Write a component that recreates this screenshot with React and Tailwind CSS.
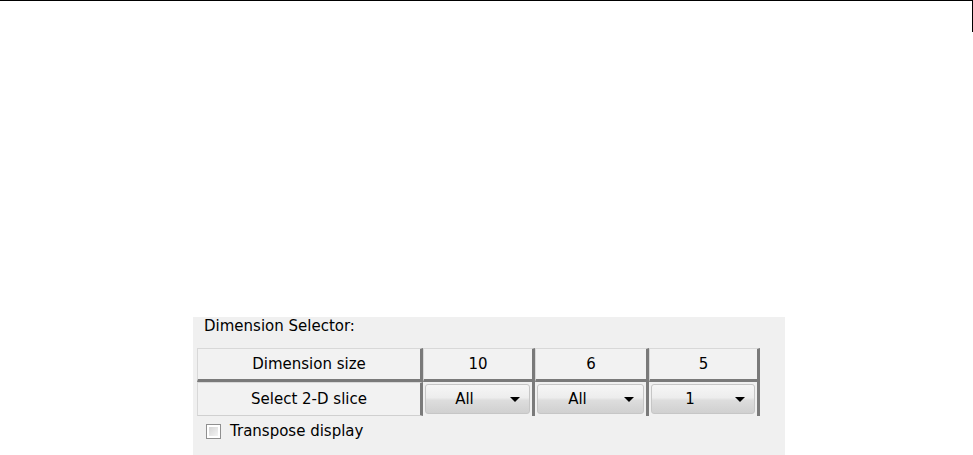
import React from "react";

const font = { fontFamily: '"DejaVu Sans", sans-serif' };

const sizes = [
  { value: "10", w: "w-[112px]" },
  { value: "6", w: "w-[114px]" },
  { value: "5", w: "w-[111px]" },
];

const slices = [
  { value: "All", w: "w-[112px]" },
  { value: "All", w: "w-[114px]" },
  { value: "1", w: "w-[111px]" },
];

const Arrow = () => (
  <div className="w-0 h-0 border-l-[5px] border-r-[5px] border-t-[5px] border-l-transparent border-r-transparent border-t-black" />
);

const Dropdown = ({ value, w }) => (
  <div className={`${w} h-[34px] border-r-[3px] border-r-[#7a7a7a] px-[2px] pt-[2px] pb-[2px] flex`}>
    <div className="flex-1 flex items-center rounded-[3px] border border-[#c6c6c6] bg-[linear-gradient(#f6f6f6,#ededed_45%,#dddddd_55%,#d0d0d0)]">
      <span className="flex-1 text-center leading-[18px]">{value}</span>
      <div className="w-[26px] flex justify-center pr-[3px]">
        <Arrow />
      </div>
    </div>
  </div>
);

export default function App() {
  return (
    <div className="h-[455px] w-[973px] bg-white overflow-hidden flex flex-col text-[15px] text-black" style={font}>
      {/* top frame edge */}
      <div className="h-[32px] border-t border-black flex justify-end">
        <div className="w-px h-full bg-black" />
      </div>

      <div className="mt-[285px] ml-[193px] w-[592px] flex-1 bg-[#f0f0f0] flex flex-col">
        <div className="ml-[11px] leading-[18px]">Dimension Selector:</div>

        <div className="mt-[13px] ml-[4px] flex flex-col">
          {/* row 1 */}
          <div className="flex">
            <div className="w-[226px] h-[34px] flex items-center justify-center bg-[#f2f2f2] border-t border-l border-t-[#d8d8d8] border-l-[#d8d8d8] border-b-[3px] border-b-[#7a7a7a] border-r-[3px] border-r-[#7a7a7a]">
              Dimension size
            </div>
            {sizes.map((s, i) => (
              <div
                key={i}
                className={`${s.w} h-[34px] flex items-center justify-center bg-[#f2f2f2] border-t border-l border-t-[#d8d8d8] border-l-[#d8d8d8] border-b-[3px] border-b-[#7a7a7a] border-r-[3px] border-r-[#7a7a7a]`}
              >
                {s.value}
              </div>
            ))}
          </div>

          {/* row 2 */}
          <div className="flex">
            <div className="w-[226px] h-[34px] flex items-center justify-center bg-[#f2f2f2] border-t border-l border-b border-t-[#d8d8d8] border-l-[#d8d8d8] border-b-[#d0d0d0] border-r-[3px] border-r-[#7a7a7a]">
              Select 2-D slice
            </div>
            {slices.map((s, i) => (
              <Dropdown key={i} value={s.value} w={s.w} />
            ))}
          </div>
        </div>

        <div className="mt-[6px] ml-[13px] flex items-center gap-[9px]">
          <div className="w-[15px] h-[15px] border border-[#8f8f8f] bg-white p-[2px]">
            <div className="w-full h-full bg-[linear-gradient(135deg,#d4d4d4,#f4f4f4)]" />
          </div>
          <span className="leading-[18px]">Transpose display</span>
        </div>
      </div>
    </div>
  );
}
